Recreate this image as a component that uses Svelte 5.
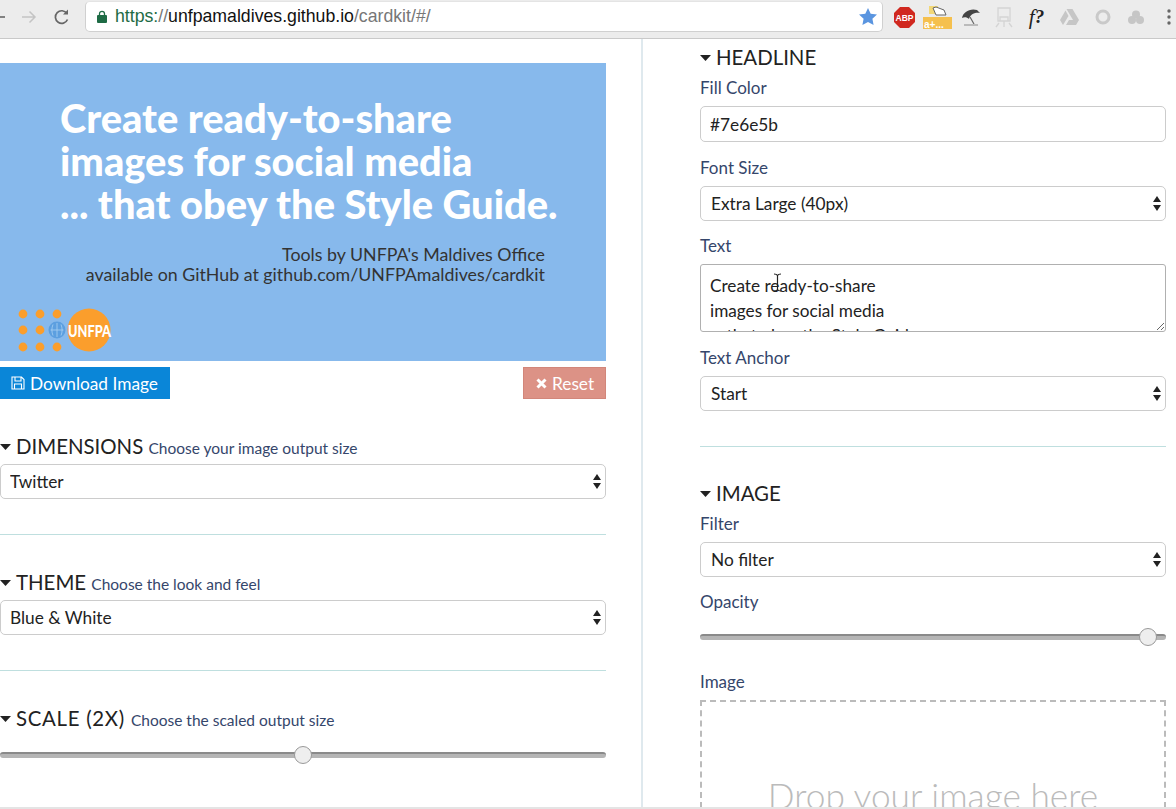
<script>
  let fill = $state('#7e6e5b')
  let text = $state('Create ready-to-share\nimages for social media\n... that obey the Style Guide.')
  let scale = $state(2)
  let opacity = $state(0.98)
</script>

{#snippet caret()}
  <svg class="caret" width="11" height="6" viewBox="0 0 11 6"><path d="M0 0h11L5.5 6z" fill="#222"/></svg>
{/snippet}

{#snippet picker(value)}
  <div class="picker">
    <select>
      <option>{value}</option>
    </select>
    <svg class="updown" width="8" height="15" viewBox="0 0 8 15" fill="#222">
      <path d="M4 0l4 6H0z"/>
      <path d="M0 9h8l-4 6z"/>
    </svg>
  </div>
{/snippet}

<div class="browser">
  <div class="toolbar">
    <svg class="nav back" width="6" height="14" viewBox="0 0 6 14" fill="none" stroke="#666" stroke-width="1.6"><path d="M0 7h6"/></svg>
    <svg class="nav" width="16" height="14" viewBox="0 0 16 14" fill="none" stroke="#c4c4c4" stroke-width="1.5"><path d="M1 7h13M8.5 1.5 14 7l-5.500 5.500"/></svg>
    <svg class="nav" width="18" height="18" viewBox="0 0 18 18" fill="none" stroke="#666" stroke-width="1.7"><path d="M14.5 11.500a6.300 6.300 0 1 1-.6-6"/><path d="M15 1.500v5h-5" fill="#666" stroke="none"/></svg>
    <div class="omnibox">
      <svg width="10" height="13" viewBox="0 0 10 13"><path d="M2.5 6V3.800a2.500 2.500 0 0 1 5 0V6" fill="none" stroke="#1e6b45" stroke-width="1.3"/><rect y="5" width="10" height="8" rx="1" fill="#1e6b45"/></svg>
      <span class="url"><span class="scheme">https:</span><span class="dim">//</span>unfpamaldives.github.io<span class="dim">/cardkit/#/</span></span>
      <svg class="star" width="18" height="17" viewBox="0 0 18 17"><path d="M9 0l2.700 5.700 6.300.8-4.600 4.300 1.200 6.200L9 14l-5.600 3 1.200-6.200L0 6.500l6.300-.8z" fill="#5a95e0"/></svg>
    </div>
    <div class="extensions">
      <span class="ext"><svg width="21" height="21" viewBox="0 0 21 21"><path d="M6 0h9l6 6v9l-6 6H6l-6-6V6z" fill="#d0281f"/><text x="10.500" y="14" text-anchor="middle" class="abp">ABP</text></svg></span>
      <span class="ext"><svg width="29" height="24" viewBox="0 0 29 24"><rect x="0" y="12" width="29" height="12" fill="#f5c04e"/><rect x="6" y="1" width="9" height="8" fill="#f2d878"/><path d="M10 3l3-1 8 3 2 5H13z" fill="#fff" stroke="#666"/><text x="1" y="22.500" class="aplus">a+...</text></svg></span>
      <span class="ext"><svg width="20" height="20" viewBox="0 0 20 20"><path d="M1 11C2 5 9 1 16 3l3 3C13 5 9 8 8 12 6 10 3 10 1 11z" fill="#444"/><path d="M9 10l4 7" stroke="#666" stroke-width="1.2"/><path d="M3 18h14" stroke="#bbb" stroke-width="2"/></svg></span>
      <span class="ext"><svg width="18" height="21" viewBox="0 0 18 21" fill="none" stroke="#d4d4d4" stroke-width="1.3"><path d="M3 1h12v13H3zM5 14v-4h8v4M1 20l3-4M17 20l-3-4M9 14v6"/></svg></span>
      <span class="ext fq"><i>f</i><b>?</b></span>
      <span class="ext"><svg width="19" height="16" viewBox="0 0 19 16" fill="#c6c6c6"><path d="M6.500 0h6l6.500 11h-6z"/><path d="M5.500 1.500 8.500 7 3 16 0 11z"/><path d="M6 16l3-5h10l-3 5z"/></svg></span>
      <span class="ext"><svg width="16" height="16" viewBox="0 0 16 16" fill="none" stroke="#c9c9c9" stroke-width="3"><circle cx="8" cy="8" r="6"/></svg></span>
      <span class="ext"><svg width="16" height="15" viewBox="0 0 16 15" fill="#c6c6c6"><circle cx="8" cy="4.500" r="4"/><circle cx="4" cy="10" r="4"/><circle cx="12" cy="10" r="4"/></svg></span>
      <span class="ext"><svg width="4" height="16" viewBox="0 0 4 16" fill="#666"><circle cx="2" cy="2" r="1.7"/><circle cx="2" cy="8" r="1.7"/><circle cx="2" cy="14" r="1.7"/></svg></span>
    </div>
  </div>

  <main class="page">
    <section class="left">
      <svg class="card" width="606" height="298" viewBox="0 0 606 298">
        <rect width="606" height="298" fill="#87b9ec"/>
        <g class="headline">
          <text x="60" y="70">Create ready-to-share</text>
          <text x="60" y="113">images for social media</text>
          <text x="60" y="156">... that obey the Style Guide.</text>
        </g>
        <g class="credit">
          <text x="545" y="198">Tools by UNFPA's Maldives Office</text>
          <text x="545" y="218">available on GitHub at github.com/UNFPAmaldives/cardkit</text>
        </g>
        <g fill="#fb9e2c">
          <circle cx="23" cy="251" r="4.400"/><circle cx="40" cy="251" r="4.400"/><circle cx="57" cy="251" r="4.400"/>
          <circle cx="23" cy="267" r="4.400"/><circle cx="40" cy="267" r="4.400"/>
          <circle cx="23" cy="284" r="4.400"/><circle cx="40" cy="284" r="4.400"/><circle cx="57" cy="284" r="4.400"/>
          <circle cx="89" cy="267" r="21.500"/>
        </g>
        <circle cx="57" cy="267" r="8.500" fill="#5c9fe0"/>
        <path d="M57 260v14M50.500 267h13M53 261.500c-1.500 3.500-1.500 7.500 0 11M61 261.500c1.500 3.500 1.500 7.500 0 11" fill="none" stroke="#a9d0f2" stroke-width=".8"/>
        <text x="68" y="273.500" class="logo" textLength="43" lengthAdjust="spacingAndGlyphs">UNFPA</text>
      </svg>

      <div class="actions">
        <button class="download">
          <svg width="14" height="14" viewBox="0 0 14 14" fill="none" stroke="#fff" stroke-width="1.1"><path d="M1 1h9.500L13 3.500V13H1zM4 1v4h6V1M3.500 13V8h7v5"/></svg>
          Download Image
        </button>
        <button class="reset">
          <svg width="11" height="11" viewBox="0 0 11 11" fill="none" stroke="#fff" stroke-width="3"><path d="M1.500 1.500l8 8M9.500 1.500l-8 8"/></svg>
          Reset
        </button>
      </div>

      <div class="group first">
        <h3>{@render caret()}DIMENSIONS <small>Choose your image output size</small></h3>
        {@render picker('Twitter')}
      </div>
      <hr />
      <div class="group">
        <h3>{@render caret()}THEME <small>Choose the look and feel</small></h3>
        {@render picker('Blue & White')}
      </div>
      <hr />
      <div class="group">
        <h3>{@render caret()}<span class="wide">SCALE (2X)</span><small>Choose the scaled output size</small></h3>
        <input class="slider scale" type="range" min="1" max="3" step="0.1" bind:value={scale} />
      </div>
    </section>

    <section class="right">
      <h3>{@render caret()}HEADLINE</h3>
      <label for="fill">Fill Color</label>
      <input id="fill" class="field" type="text" bind:value={fill} />
      <span class="label">Font Size</span>
      {@render picker('Extra Large (40px)')}
      <label for="txt">Text</label>
      <div class="textwrap">
        <textarea id="txt" bind:value={text}></textarea>
        <svg class="ibeam" width="9" height="19" viewBox="0 0 9 19" fill="none" stroke="#222" stroke-width="1.2"><path d="M1 1c2 0 3 .5 3.500 1.500C5 1.500 6 1 8 1M4.500 2.500v14M1 18c2 0 3-.5 3.500-1.500C5 17.500 6 18 8 18"/></svg>
      </div>
      <span class="label">Text Anchor</span>
      {@render picker('Start')}
      <hr />
      <h3 class="image-head">{@render caret()}IMAGE</h3>
      <span class="label">Filter</span>
      {@render picker('No filter')}
      <span class="label">Opacity</span>
      <input class="slider opacity" type="range" min="0" max="1" step="0.01" bind:value={opacity} />
      <span class="label image-label">Image</span>
      <div class="dropzone">Drop your image here</div>
    </section>
  </main>
  <div class="statusline"></div>
</div>

<style>
  :global(body) {
    margin: 0;
    background: #fff;
  }
  .browser {
    width: 1176px;
    height: 809px;
    display: flex;
    flex-direction: column;
    overflow: hidden;
    font-family: Lato, "Open Sans", sans-serif;
    color: #222;
  }
  .toolbar {
    height: 38px;
    flex-shrink: 0;
    display: flex;
    align-items: center;
    background: #ececec;
    border-bottom: 1px solid #c9c9c9;
    overflow: hidden;
  }
  .nav { flex-shrink: 0; margin: -4px 0 0 16px; }
  .nav.back { margin-left: -1px; }
  .omnibox {
    width: 798px;
    height: 31px;
    margin: -5px 0 0 14px;
    flex-shrink: 0;
    box-sizing: border-box;
    display: flex;
    align-items: center;
    gap: 8px;
    padding: 0 5px 0 11px;
    background: #fff;
    border: 1px solid #d0d0d0;
    border-top-color: #e4e4e4;
    border-radius: 5px;
  }
  .url {
    flex: 1;
    font-family: "Liberation Sans", sans-serif;
    font-size: 17.7px;
    color: #111;
  }
  .scheme { color: #1e6b45; }
  .dim { color: #777; }
  .extensions {
    display: flex;
    flex-shrink: 0;
    margin: -4px 0 0 5px;
  }
  .ext {
    width: 33px;
    flex-shrink: 0;
    display: flex;
    align-items: center;
    justify-content: center;
  }
  .abp {
    font: bold 8.5px "Liberation Sans", sans-serif;
    fill: #fff;
  }
  .aplus {
    font: bold 10px "Liberation Sans", sans-serif;
    fill: #fff;
  }
  .fq {
    font: italic 21px "Liberation Serif", serif;
    color: #222;
  }
  .fq b { font-size: 19px; }
  .page {
    flex: 1;
    min-height: 0;
    display: flex;
    overflow: hidden;
  }
  .left {
    width: 643px;
    flex-shrink: 0;
    box-sizing: border-box;
    padding: 24px 35px 0 0;
    border-right: 2px solid #dfe9ee;
  }
  .card { display: block; }
  .headline text {
    font: 900 39.8px Lato, sans-serif;
    fill: #fff;
  }
  .credit text {
    font: 400 17.8px Lato, sans-serif;
    fill: #333;
    text-anchor: end;
  }
  .logo {
    font: 900 17px Lato, sans-serif;
    fill: #fff;
  }
  .actions {
    display: flex;
    justify-content: space-between;
    margin-top: 6px;
  }
  button {
    height: 32px;
    display: flex;
    align-items: center;
    gap: 5px;
    border: 0;
    font-family: inherit;
    font-size: 17.3px;
    color: #fff;
  }
  .download {
    width: 170px;
    padding: 0 0 0 11px;
    background: #0a86d8;
  }
  .reset {
    width: 83px;
    padding: 0 0 0 12px;
    background: #dc9286;
    border: 1px solid #d2867a;
  }
  h3 {
    margin: 0;
    height: 26px;
    display: flex;
    align-items: center;
    font-size: 20.4px;
    font-weight: 400;
    line-height: 26px;
    white-space: pre;
  }
  .wide { letter-spacing: 0.7px; margin-right: 6px; }
  .caret { flex-shrink: 0; margin: 2px 5px 0 0; }
  small {
    font-size: 15.5px;
    color: #35466b;
    margin-top: 3px;
  }
  .group.first { margin-top: 34px; }
  .group h3 { margin-bottom: 5px; }
  .picker { position: relative; }
  select, .field {
    display: block;
    width: 100%;
    box-sizing: border-box;
    height: 35px;
    padding: 0 10px;
    background: #fff;
    border: 1px solid #ccc;
    border-radius: 5px;
    font-family: inherit;
    font-size: 17.3px;
    color: #222;
    appearance: none;
    outline: none;
  }
  .left select { padding-left: 9px; }
  .updown {
    position: absolute;
    right: 5px;
    top: 10px;
    pointer-events: none;
  }
  hr {
    height: 1px;
    margin: 35px 0 34px;
    border: 0;
    background: #bfdfdf;
  }
  .slider {
    display: block;
    width: 100%;
    height: 20px;
    margin: 0;
    appearance: none;
    background: transparent;
  }
  .slider::-webkit-slider-runnable-track {
    height: 6px;
    border-radius: 3px;
    background: #b5b5b5;
    border-top: 2px solid #8a8a8a;
    box-sizing: border-box;
  }
  .slider::-webkit-slider-thumb {
    appearance: none;
    width: 18px;
    height: 18px;
    margin-top: -8px;
    border-radius: 50%;
    background: #eee;
    border: 1px solid #999;
    box-sizing: border-box;
  }
  .slider.scale { margin-top: 14px; }
  .right {
    flex: 1;
    min-width: 0;
    padding: 5px 10px 0 57px;
  }
  label, .label {
    display: block;
    height: 24px;
    line-height: 24px;
    font-size: 17px;
    color: #35466b;
  }
  .right h3 { margin-bottom: 6px; }
  .right label, .right .label { margin-bottom: 6px; }
  .field { height: 36px; margin-bottom: 14px; padding-left: 9px; }
  .right .picker { margin-bottom: 13px; }
  .textwrap { position: relative; height: 68px; margin-bottom: 14px; }
  textarea {
    display: block;
    width: 100%;
    height: 68px;
    box-sizing: border-box;
    padding: 8px 9px;
    border: 1px solid #b0b0b0;
    border-radius: 3px;
    font-family: inherit;
    font-size: 17.2px;
    line-height: 25px;
    color: #222;
    overflow: hidden;
    outline: none;
    resize: vertical;
  }
  .ibeam {
    position: absolute;
    left: 73px;
    top: 9px;
    pointer-events: none;
  }
  .right hr { margin: 35px 0 33px; }
  .slider.opacity { margin: 13px 0 23px; }
  .dropzone {
    height: 200px;
    box-sizing: border-box;
    border: 2px dashed #bbb;
    padding-top: 72px;
    text-align: center;
    font-size: 35.3px;
    font-weight: 300;
    color: #bbb;
  }
  .statusline {
    height: 2px;
    flex-shrink: 0;
    background: #e4e4e4;
  }
</style>
